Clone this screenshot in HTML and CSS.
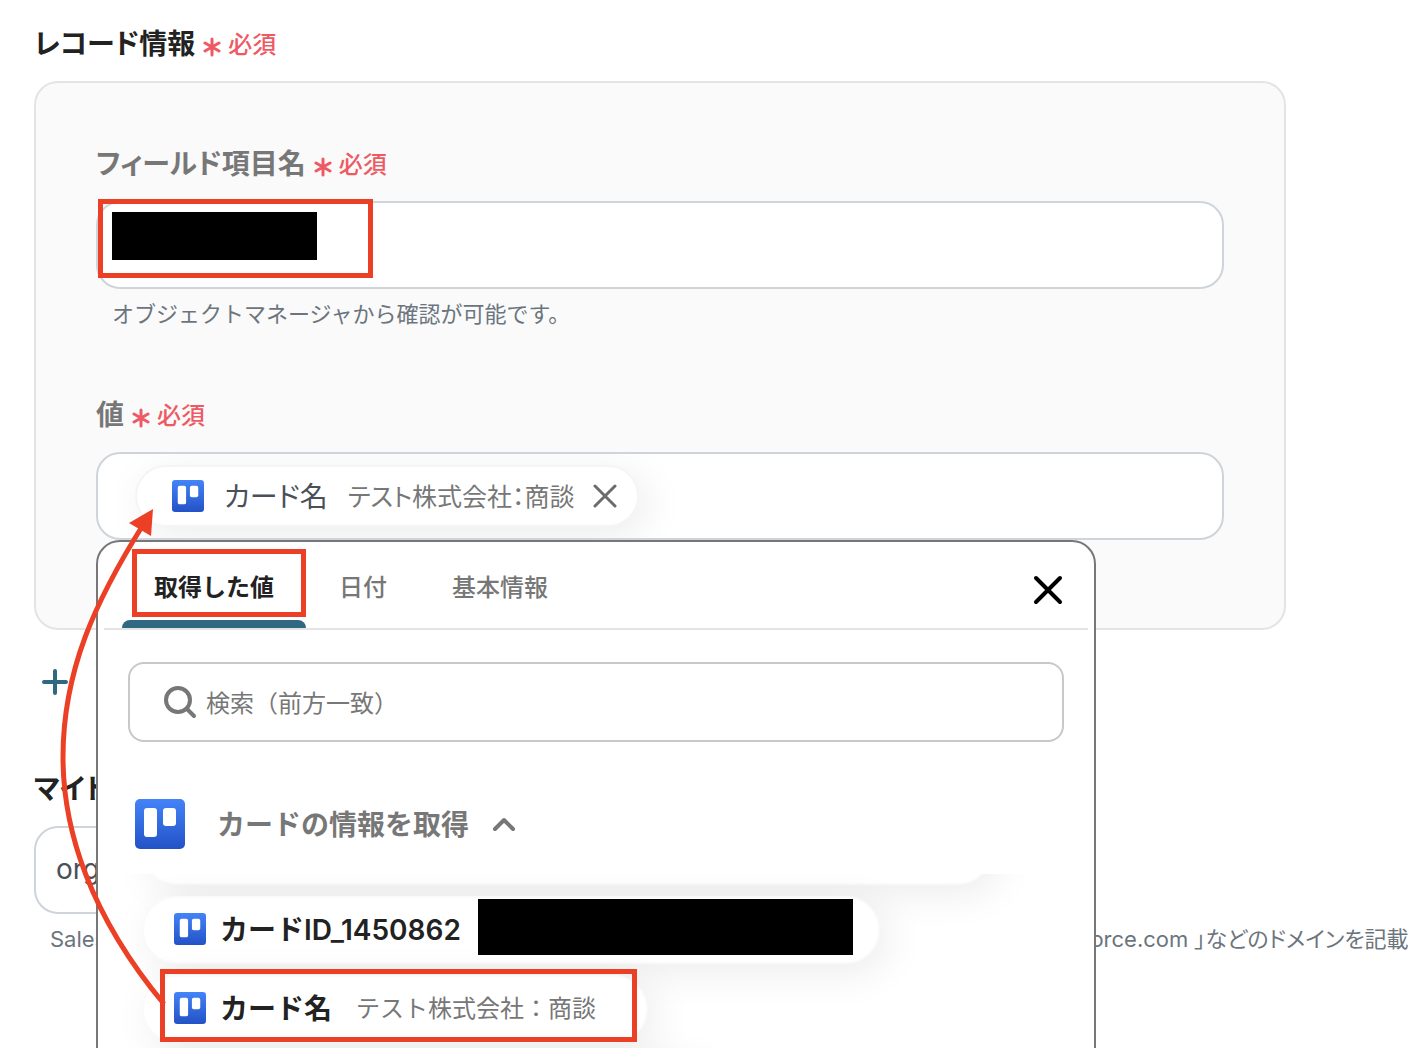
FILE: index.html
```html
<!DOCTYPE html>
<html lang="ja">

<head>
  <meta charset="UTF-8">
  <meta name="viewport" content="width=device-width, initial-scale=1">
  <title>レコード情報</title>
  <link rel="stylesheet" href="styles.css">
</head>

<body>
  <svg class="defs" width="0" height="0" aria-hidden="true">
    <defs>
      <linearGradient id="blue" x1="0" y1="0" x2="0" y2="1">
        <stop offset="0" stop-color="#4384f8"/>
        <stop offset="1" stop-color="#2352c6"/>
      </linearGradient>
      <symbol id="board" viewBox="0 0 50 50">
        <rect width="50" height="50" rx="5" fill="url(#blue)"/>
        <rect x="9" y="9" width="13" height="29" rx="3" fill="#fff"/>
        <rect x="28" y="9" width="13" height="18" rx="3" fill="#fff"/>
      </symbol>
      <symbol id="asterisk" viewBox="0 0 18 20">
        <path d="M9 2v16M2 6l14 8M16 6L2 14" fill="none" stroke="#ee5a64" stroke-width="3" stroke-linecap="round"/>
      </symbol>
    </defs>
  </svg>

  <div class="page">
    <div class="label dark">
      <span>レコード情報</span>
      <span class="required"><svg class="star"><use href="#asterisk"/></svg>必須</span>
    </div>

    <div class="panel">
      <div class="field">
        <label class="label" for="fieldName">
          <span>フィールド項目名</span>
          <span class="required"><svg class="star"><use href="#asterisk"/></svg>必須</span>
        </label>
        <div class="box-wrap">
          <input type="text" id="fieldName" class="box">
          <span class="redacted redacted-name"></span>
          <span class="mark mark-name"></span>
        </div>
        <p class="help">オブジェクトマネージャから確認が可能です。</p>
      </div>

      <div class="field">
        <div class="label">
          <span>値</span>
          <span class="required"><svg class="star"><use href="#asterisk"/></svg>必須</span>
        </div>
        <div class="box-wrap">
          <div class="box">
            <div class="chip">
              <svg class="logo"><use href="#board"/></svg>
              <span class="chip-name">カード名</span>
              <span class="chip-value">テスト株式会社：商談</span>
              <button type="button" class="chip-del" aria-label="削除">
                <svg width="24" height="24" viewBox="0 0 24 24"><path d="M2 2l20 20M22 2L2 22" fill="none" stroke="#6b6b6b" stroke-width="3" stroke-linecap="round"/></svg>
              </button>
            </div>
          </div>

          <div class="popup">
            <div class="tabs">
              <button type="button" class="tab active">取得した値<span class="mark mark-tab"></span></button>
              <button type="button" class="tab">日付</button>
              <button type="button" class="tab">基本情報</button>
              <button type="button" class="close" aria-label="閉じる">
                <svg width="32" height="32" viewBox="0 0 32 32"><path d="M4 4l24 24M28 4L4 28" fill="none" stroke="#000" stroke-width="4" stroke-linecap="round"/></svg>
              </button>
            </div>

            <div class="search">
              <svg width="34" height="34" viewBox="0 0 34 34"><g fill="none" stroke="#777" stroke-width="4" stroke-linecap="round"><circle cx="14" cy="15" r="12"/><path d="M23 24l7 7"/></g></svg>
              <input type="text" placeholder="検索（前方一致）" aria-label="検索">
            </div>

            <button type="button" class="group">
              <svg class="logo-big"><use href="#board"/></svg>
              <span class="group-name">カードの情報を取得</span>
              <svg width="24" height="16" viewBox="0 0 24 16"><path d="M3 13l9-9 9 9" fill="none" stroke="#777" stroke-width="4" stroke-linecap="round" stroke-linejoin="round"/></svg>
            </button>

            <div class="scroll">
              <div class="list">
                <button type="button" class="item item-wide" aria-label="カード"></button>
                <button type="button" class="item item-id">
                  <svg class="logo"><use href="#board"/></svg>
                  <span class="item-name">カードID_1450862</span>
                  <span class="redacted redacted-id"></span>
                </button>
                <button type="button" class="item">
                  <svg class="logo"><use href="#board"/></svg>
                  <span class="item-name">カード名</span>
                  <span class="item-value">テスト株式会社：商談</span>
                  <span class="mark mark-item"></span>
                </button>
                <button type="button" class="item item-last" aria-label="カード"></button>
              </div>
            </div>
          </div>
        </div>
      </div>
    </div>

    <button type="button" class="plus" aria-label="追加">
      <svg width="28" height="28" viewBox="0 0 28 28"><path d="M14 3v22M3 14h22" fill="none" stroke="#2f6880" stroke-width="4" stroke-linecap="round"/></svg>
    </button>

    <div class="field">
      <label class="label dark" for="domain">マイドメイン</label>
      <input type="text" id="domain" class="box box-domain" value="orgfarm">
      <p class="help help-domain">
        <span>Salesforce</span>
        <span>「 salesforce.com 」などのドメインを記載</span>
      </p>
    </div>

    <svg class="arrow" width="180" height="1048" viewBox="0 0 180 1048" aria-hidden="true">
      <path d="M164 1004C90 915 63 830 63 757C63 670 96 600 143 525" fill="none" stroke="#eb4026" stroke-width="5"/>
      <path d="M153 509L129 523L151 536Z" fill="#eb4026"/>
    </svg>
  </div>
</body>

</html>
```

FILE: styles.css
```css
*{
	box-sizing:border-box;
}
body{
	margin:0;
	background:#fff;
	color:#222;
	font-family:Inter,"Noto Sans CJK JP",sans-serif;
	font-size:28px;
}
button,input{
	margin:0;
	padding:0;
	border:0;
	background:none;
	color:inherit;
	font:inherit;
}
button{
	cursor:pointer;
}
svg{
	display:block;
	flex:none;
}
.defs{
	position:absolute;
}
.page{
	position:relative;
	height:100vh;
	padding:24px 126px 0 34px;
	overflow:hidden;
}

/* ラベル */
.label{
	display:flex;
	align-items:center;
	gap:8px;
	height:40px;
	margin-bottom:17px;
	color:#777;
	font-weight:600;
	line-height:40px;
	font-feature-settings:"palt";
}
.dark{
	color:#222;
}
.required{
	display:flex;
	align-items:center;
	gap:7px;
	margin-top:2px;
	color:#ee5a64;
	font-size:24px;
	font-weight:500;
}
.star{
	width:18px;
	height:20px;
	margin-top:3px;
}
.help{
	height:32px;
	margin:9px 16px 0;
	color:#6c757d;
	font-size:22px;
	line-height:32px;
	white-space:nowrap;
}

/* 入力欄 */
.panel{
	padding:61px 60px 88px;
	border:2px solid #e4e4e4;
	border-radius:24px;
	background:#fafafa;
}
.panel .field + .field{
	margin-top:65px;
}
.box-wrap{
	position:relative;
}
.box{
	display:flex;
	align-items:center;
	width:100%;
	height:88px;
	padding:0 37px;
	border:2px solid #ced4da;
	border-radius:24px;
	background:#fff;
	color:#495057;
	overflow:hidden;
}
.box-domain{
	width:80%;
	padding:0 20px 2px;
}
.help-domain{
	display:flex;
	font-feature-settings:"palt";
}
.help-domain span:first-child{
	flex:0 0 962px;
}
.chip{
	display:flex;
	align-items:center;
	height:62px;
	padding:0 20px 0 35px;
	border:2px solid #f5f5f5;
	border-radius:31px;
	background:#fff;
	box-shadow:8px 8px 40px rgba(0,0,0,.08);
	font-feature-settings:"palt";
}
.logo{
	width:32px;
	height:32px;
}
.chip-name{
	margin:0 20px 2px;
}
.chip-value{
	margin-bottom:3px;
	color:#777;
	font-size:25px;
}
.chip-del{
	margin-left:18px;
}

/* ポップアップ */
.popup{
	position:absolute;
	top:100%;
	left:0;
	z-index:1;
	width:1000px;
	height:800px;
	border:2px solid #777;
	border-radius:24px;
	background:#fff;
}
.tabs{
	display:flex;
	gap:1px;
	height:88px;
	margin:0 6px;
	padding-left:18px;
	border-bottom:2px solid #e4e4e4;
}
.tab{
	position:relative;
	padding:1px 32px 0;
	color:#777;
	font-size:24px;
	font-weight:500;
}
.active{
	color:#222;
	font-weight:600;
}
.active::after{
	content:"";
	position:absolute;
	right:0;
	bottom:0;
	left:0;
	height:8px;
	border-radius:8px 8px 0 0;
	background:#2f6880;
}
.close{
	margin:10px 24px 0 auto;
}
.search{
	display:flex;
	align-items:center;
	gap:8px;
	height:80px;
	margin:32px 30px;
	padding:0 34px;
	border:2px solid #c8c8c8;
	border-radius:16px;
}
.search input{
	flex:1;
	min-width:0;
	padding-top:2px;
	font-size:24px;
}
.search input::placeholder{
	color:#777;
	opacity:1;
}
.group{
	display:flex;
	align-items:center;
	width:100%;
	height:100px;
	padding-left:37px;
	color:#777;
	font-weight:600;
}
.group-name{
	margin:0 23px 3px 32px;
}
.logo-big{
	width:50px;
	height:50px;
}
.scroll{
	height:400px;
	overflow:hidden;
}
.list{
	display:flex;
	flex-direction:column;
	align-items:flex-start;
	gap:11px;
	margin-top:-57px;
	padding-left:44px;
}
.item{
	position:relative;
	display:flex;
	align-items:center;
	height:68px;
	padding:0 50px 2px 30px;
	border:2px solid #fafafa;
	border-radius:34px;
	background:#fff;
	box-shadow:8px 8px 40px rgba(0,0,0,.08);
}
.item-wide{
	width:850px;
}
.item-last{
	width:560px;
}
.item-id{
	padding-right:25px;
}
.item-name{
	margin:0 0 2px 14px;
	color:#222;
	font-weight:600;
}
.item-value{
	margin:0 0 3px 24px;
	color:#777;
	font-size:24px;
}

/* 黒塗りと赤枠 */
.redacted{
	background:#000;
}
.redacted-name{
	position:absolute;
	top:11px;
	left:16px;
	width:205px;
	height:48px;
}
.redacted-id{
	width:375px;
	height:56px;
	margin:-4px 0 0 17px;
}
.mark{
	position:absolute;
	z-index:1;
	border:5px solid #eb4026;
}
.mark-name{
	top:-2px;
	left:2px;
	width:275px;
	height:79px;
}
.mark-tab{
	top:7px;
	right:0;
	left:10px;
	height:68px;
}
.mark-item{
	top:-8px;
	right:9px;
	left:16px;
	height:73px;
}
.plus{
	display:flex;
	align-items:center;
	height:48px;
	margin:28px 0 63px 7px;
}
.arrow{
	position:absolute;
	top:0;
	left:0;
	z-index:2;
	pointer-events:none;
}
```
